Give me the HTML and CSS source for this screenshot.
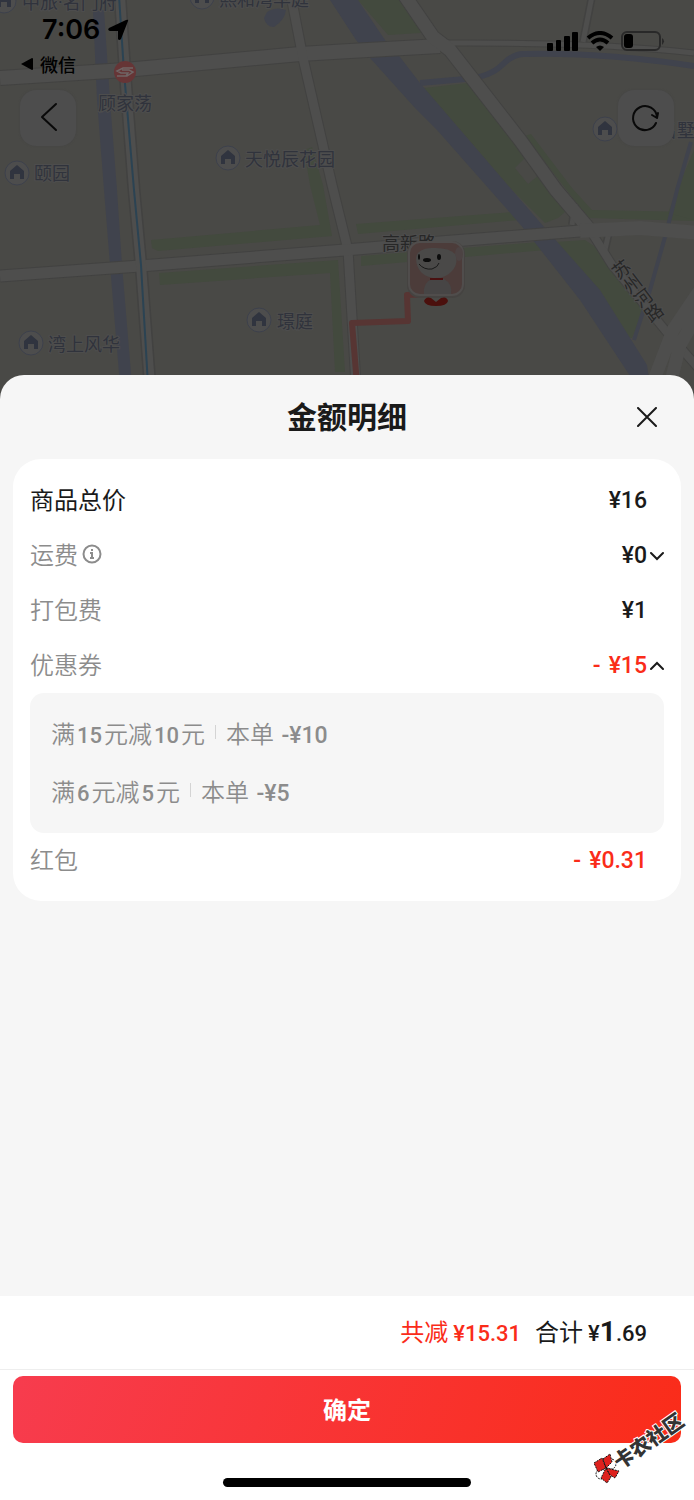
FILE: index.html
```html
<!DOCTYPE html>
<html lang="zh-CN">
<head>
<meta charset="utf-8">
<meta name="viewport" content="width=device-width, initial-scale=1">
<title>金额明细</title>
<link rel="stylesheet" href="styles.css">
</head>
<body>
<div class="app">
  <header class="top">
    <svg class="map" viewBox="0 0 694 400" preserveAspectRatio="xMidYMin slice" aria-hidden="true">
      <defs>
        <g id="poi">
          <circle r="12" fill="#4d4d4d" stroke="#3d414c" stroke-width="1"/>
          <path d="M0-8 7-2V6H3V1H-3V6H-7V-2Z" fill="#30343f"/>
        </g>
      </defs>
      <rect width="694" height="400" fill="#494946"/>
      <g fill="#434a3e">
        <path d="M358 0H402L425 29 420 33 388 35Z"/>
        <path d="M424 88 468 83 515 140 556 190 565 212 558 218 545 223 512 190Z"/>
        <path d="M525 136 531 134 572 188 592 210 694 212V221L588 218Z"/>
        <path d="M555 242 585 240 600 250 618 275 643 310 632 338 624 337Z"/>
        <path d="M694 150 677 190 668 213 694 220Z"/>
        <path d="M356 224 512 212 520 220 358 234Z"/>
        <path d="M361 256 540 242 546 250 361 266Z"/>
        <path d="M151 240 320 225 310 185 304 150 312 147 323 185 332 236 158 251 152 248Z"/>
        <path d="M159 273 338 260 345 372H335L330 273 160 285Z"/>
      </g>
      <path d="M515 168 525 158 539 175 528 184Z" fill="#494946"/>
      <g fill="#40434d">
        <path d="M93 10H104L110 100 117 190 122 265 132 385H120L110 265 104 190 97 100Z"/>
        <path d="M330 0H358L385 40 400 57 420 83 512 190 545 228 600 290 647 365 650 385H636L580 300 525 230 490 190 437 130 415 108 370 58 356 40Z"/>
        <path d="M267 12Q276 6 286 10 285 20 274 27 266 27 264 18Z"/>
      </g>
      <g fill="none" stroke="#40434d">
        <path d="M420 83 465 79Q490 77 502 65T525 54Q600 52 694 66" stroke-width="6"/>
        <path d="M691 142 677 190 667 230 650 290 634 340" stroke-width="4"/>
      </g>
      <g fill="none" stroke="#424241" stroke-linejoin="round">
        <path d="M0 78 125 70 300 54 350 51 440 46" stroke-width="16"/>
        <path d="M440 43Q600 42 694 53" stroke-width="7"/>
        <path d="M405-4 433 37 450 50 520 140 556 190 590 230" stroke-width="15"/>
        <path d="M590 230 612 265 665 330 700 370" stroke-width="10"/>
        <path d="M291-4 303 58 332 185 348 250 356 385" stroke-width="11"/>
        <path d="M0 276 140 266 345 250 440 242 580 231 640 228 700 233" stroke-width="13"/>
        <path d="M120-4 125 72 134 190 141 265 150 385" stroke-width="13"/>
        <path d="M592-4 583 42M572 225 575 204M605 250 609 232M700 290 673 330 652 385M700 310 680 345 670 385" stroke-width="8"/>
      </g>
      <g fill="none" stroke="#4e4e4d" stroke-linejoin="round">
        <path d="M592-4 583 42M572 225 575 204M605 250 609 232" stroke-width="5"/>
        <path d="M0 78 125 70 300 54 350 51 440 46" stroke-width="14"/>
        <path d="M440 43Q600 42 694 53" stroke-width="5"/>
        <path d="M405-4 433 37 450 50 520 140 556 190 590 230" stroke-width="13"/>
        <path d="M590 230 612 265 665 330 700 370" stroke-width="8"/>
        <path d="M700 290 673 330 652 385M700 310 680 345 670 385" stroke-width="13"/>
        <path d="M291-4 303 58 332 185 348 250 356 385" stroke-width="9"/>
        <path d="M0 276 140 266 345 250 440 242 580 231 640 228 700 233" stroke-width="11"/>
        <path d="M580 231 640 228 700 233" stroke-width="14"/>
        <path d="M120-4 125 72 134 190 141 265 150 385" stroke-width="10"/>
      </g>
      <path d="M119-4 124 72 134 190 141 265 148 385" fill="none" stroke="#2b4353" stroke-width="2"/>
      <path d="M357 385 352 323 408 321 407 295 430 294" fill="none" stroke="#573533" stroke-width="6" stroke-linejoin="round"/>
      <circle cx="125" cy="72" r="11" fill="#663536"/>
      <path d="M133 68H123L117 71 121 73H128L126 76H117M117 76H127L133 72 129 70H122" fill="none" stroke="#706565" stroke-width="1.500"/>
      <use href="#poi" x="4" y="1"/>
      <use href="#poi" x="202" y="-3"/>
      <use href="#poi" x="17" y="173"/>
      <use href="#poi" x="228" y="158"/>
      <use href="#poi" x="31" y="343"/>
      <use href="#poi" x="259" y="320"/>
      <use href="#poi" x="605" y="129"/>
      <g class="place">
        <text x="22" y="9">中旅<tspan class="dot">·</tspan>名门府</text>
        <text x="219" y="6">熙和湾华庭</text>
        <text x="98" y="110">顾家荡</text>
        <text x="34" y="180">颐园</text>
        <text x="245" y="166">天悦辰花园</text>
        <text x="48" y="351">湾上风华</text>
        <text x="277" y="328">璟庭</text>
        <text x="659" y="137">名墅</text>
      </g>
      <g class="street">
        <text x="382" y="250">高新路</text>
        <text class="street-down" transform="translate(616 262) rotate(-37)">苏州河路</text>
      </g>
      <rect x="407" y="241" width="58" height="57" rx="13" fill="#454341"/>
      <rect x="409" y="242" width="54" height="53" rx="11" fill="#4c3c3a" stroke="#504d4c" stroke-width="2"/>
      <path d="M424 294Q423 282 432 279H444Q453 284 451 294Z" fill="#474545"/>
      <ellipse cx="459" cy="254" rx="4" ry="7" fill="#4c4343"/>
      <path d="M416 259Q416 249 431 248 449 247 455 254 459 263 452 271 445 279 433 278 417 275 416 259Z" fill="#4a4948"/>
      <path d="M430 279H443" stroke="#4a1111" stroke-width="2"/>
      <g fill="#0c0c0c"><ellipse cx="427" cy="260" rx="4" ry="2"/><ellipse cx="439" cy="257" rx="2" ry="3"/><ellipse cx="419" cy="257" rx="1" ry="3"/></g>
      <path d="M419 264Q424 270 432 269 438 267 439 263" fill="none" stroke="#191919"/>
      <path d="M424 301Q426 296 431 298L436 302 441 298Q447 296 448 301 447 306 436 306 425 306 424 301Z" fill="#4b100d"/>
    </svg>

    <div class="status">
      <div class="status-left">
        <div class="clock">7:06
          <svg width="22" height="22" viewBox="0 0 22 22" aria-hidden="true"><path d="M21 2 14 20Q12 22 11 20V12H3Q0 11 2 9L19 1Q22 0 21 2Z"/></svg>
        </div>
        <a class="return" href="#"><svg width="12" height="12" viewBox="0 0 12 12" aria-hidden="true"><path d="M0 6 11 0Q12 0 12 1V11Q12 12 11 12Z"/></svg>微信</a>
      </div>
      <svg class="signals" width="118" height="20" viewBox="0 0 118 20" aria-hidden="true">
        <rect x="0" y="12" width="6" height="8" rx="1"/><rect x="9" y="9" width="5" height="11" rx="1"/><rect x="17" y="5" width="6" height="15" rx="1"/><rect x="25" y="1" width="6" height="19" rx="1"/>
        <path d="M41 7Q53-3 65 7M45 12Q53 5 61 12" fill="none" stroke="#000" stroke-width="4"/>
        <path d="M49 16Q53 13 57 16L53 20Z"/>
        <rect x="75" y="1" width="38" height="18" rx="5" fill="none" stroke="#292929" stroke-width="2"/>
        <rect x="77" y="3" width="9" height="14" rx="3"/><path d="M115 7Q119 10 115 14Z" fill="#292929"/>
      </svg>
    </div>

    <nav class="tools">
      <button class="tool" aria-label="返回"><svg width="56" height="56" viewBox="0 0 56 56"><path d="M36 14 22 27 36 40"/></svg></button>
      <button class="tool" aria-label="刷新"><svg width="56" height="56" viewBox="0 0 56 56"><path d="M38 33A12 12 0 1 1 39 27M34 25 39 28 40 23"/></svg></button>
    </nav>
  </header>

  <main class="sheet">
    <div class="sheet-head">
      <h1>金额明细</h1>
      <button class="close" aria-label="关闭"><svg width="20" height="20" viewBox="0 0 20 20"><path d="M1 1 19 19M19 1 1 19"/></svg></button>
    </div>

    <section class="card">
      <div class="row strong"><span>商品总价</span><span class="amount">¥16</span></div>
      <div class="row">
        <span class="label">运费<svg width="20" height="20" viewBox="0 0 20 20" aria-hidden="true"><circle cx="10" cy="10" r="8.500"/><path d="M8 9H10V14M8 14H12"/><path d="M9 6H11"/></svg></span>
        <button class="amount toggle" aria-expanded="false" aria-label="¥0 展开">¥0<svg width="17" height="12" viewBox="0 0 17 12"><path d="M4 3 10 9 16 3"/></svg></button>
      </div>
      <div class="row"><span>打包费</span><span class="amount">¥1</span></div>
      <div class="row">
        <span>优惠券</span>
        <button class="amount toggle off" aria-expanded="true" aria-label="减 ¥15 收起"><span class="minus">-</span>¥15<svg width="17" height="12" viewBox="0 0 17 12"><path d="M4 9 10 3 16 9"/></svg></button>
      </div>
      <ul class="coupons">
        <li><span>满<b>15</b>元减<b>10</b>元</span><i></i><span>本单 <em>-¥10</em></span></li>
        <li><span>满<b>6</b>元减<b>5</b>元</span><i></i><span>本单 <em>-¥5</em></span></li>
      </ul>
      <div class="row"><span>红包</span><span class="amount off"><span class="minus">-</span>¥0.31</span></div>
    </section>
  </main>

  <footer class="bottom">
    <div class="totals">
      <span class="saved">共减<b>¥15.31</b></span>
      <span>合计<b>¥<strong>1</strong>.69</b></span>
    </div>
    <div class="action"><button class="confirm">确定</button></div>
    <div class="home"></div>
    <svg class="mark" width="104" height="86" viewBox="0 0 104 86">
      <g stroke="#151515" stroke-width="1" stroke-dasharray="2 1">
        <ellipse cx="21" cy="56" rx="5" ry="5" fill="#fff"/><ellipse cx="11" cy="66" rx="5" ry="5" fill="#fff"/>
        <path d="M4 55 12 50 16 60 8 64ZM13 51 20 46 22 54 16 60ZM16 60 29 63 25 70 20 67ZM16 60 21 69 17 75 11 70Z" fill="#de211d"/>
      </g>
      <text transform="translate(30 62) rotate(-35)">卡农社区</text>
    </svg>
  </footer>
</div>
</body>
</html>
```

FILE: styles.css
```css
* { box-sizing: border-box; }

body {
  margin: 0;
  background: #f6f6f6;
  color: #1a1a1a;
  font-family: "Noto Sans CJK SC", sans-serif;
  font-size: 24px;
}

button {
  border: 0;
  padding: 0;
  background: none;
  color: inherit;
  font: inherit;
  cursor: pointer;
}

.app {
  display: flex;
  flex-direction: column;
  min-height: 100vh;
}

/* Map header */
.top {
  position: relative;
  min-height: 375px;
}

.map {
  position: absolute;
  inset: 0;
  width: 100%;
  height: 400px;
}

.place text,
.street text {
  font-size: 18px;
  fill: #30333c;
  stroke: #4d4d4d;
  stroke-width: 2px;
  paint-order: stroke;
}

.place .dot { font-family: Roboto, sans-serif; }
.street text { fill: #272727; }
.street .street-down { writing-mode: vertical-rl; }

.status {
  position: relative;
  display: flex;
  align-items: center;
  justify-content: space-between;
  height: 82px;
  padding: 0 29px 0 21px;
  color: #000;
}

.status-left { padding-top: 14px; }

.clock {
  display: flex;
  align-items: center;
  gap: 7px;
  padding-left: 21px;
  font: 600 27px/32px Inter, sans-serif;
}

.return {
  display: flex;
  align-items: center;
  gap: 7px;
  color: #000;
  font-size: 18px;
  font-weight: 500;
  line-height: 36px;
  text-decoration: none;
}

.tools {
  position: relative;
  display: flex;
  justify-content: space-between;
  padding: 8px 20px 0;
}

.tool {
  width: 56px;
  height: 56px;
  border-radius: 16px;
  background: #4d4d4d;
  box-shadow: 0 0 2px #444;
}

.tool svg {
  display: block;
  fill: none;
  stroke: #090909;
  stroke-width: 2;
  stroke-linecap: round;
  stroke-linejoin: round;
}

/* Price sheet */
.sheet {
  position: relative;
  flex: 1;
  padding: 0 13px 24px;
  border-radius: 24px 24px 0 0;
  background: #f6f6f6;
}

.sheet-head {
  display: grid;
  grid-template-columns: 40px 1fr 40px;
  align-items: center;
  height: 84px;
  padding: 0 14px;
}

.sheet-head h1 {
  grid-column: 2;
  margin: 0;
  padding-bottom: 4px;
  font-size: 30px;
  font-weight: 700;
  text-align: center;
}

.close {
  display: grid;
  place-items: center;
  width: 40px;
  height: 40px;
}

.close svg,
.toggle svg {
  fill: none;
  stroke: #1a1a1a;
  stroke-width: 2;
  stroke-linecap: round;
}

.card {
  padding: 14px 17px 13px;
  border-radius: 28px;
  background: #fff;
}

.row {
  display: flex;
  align-items: center;
  justify-content: space-between;
  height: 55px;
  padding-bottom: 4px;
  color: #8c8c8c;
  font-weight: 350;
}

.strong {
  color: #1a1a1a;
  font-weight: 400;
}

.label {
  display: flex;
  align-items: center;
  gap: 4px;
}

.label svg {
  fill: none;
  stroke: #8c8c8c;
  stroke-width: 2;
}

.amount {
  padding: 4px 17px 0 0;
  color: #1a1a1a;
  font: 500 23px/32px Roboto, sans-serif;
}

.toggle {
  display: flex;
  align-items: center;
  padding-right: 0;
}

.off { color: #fa2c19; }
.minus { margin-right: 8px; }

.coupons {
  margin: 0;
  padding: 10px 21px 14px;
  border-radius: 14px;
  background: #f6f6f6;
  color: #8c8c8c;
  font-weight: 350;
  list-style: none;
}

.coupons li {
  display: flex;
  align-items: center;
  height: 58px;
}

.coupons b,
.coupons em {
  font-family: Roboto, sans-serif;
  font-size: 22px;
  font-style: normal;
  font-weight: 500;
}

.coupons b { margin: 0 2px; }
.coupons em {
  margin-left: 2px;
  font-size: 23px;
}

.coupons i {
  width: 1px;
  height: 14px;
  margin: 0 10px;
  background: #d4d4d4;
}

/* Totals and confirm */
.bottom {
  position: relative;
  background: #fff;
}

.totals {
  display: flex;
  align-items: center;
  justify-content: flex-end;
  gap: 14px;
  height: 74px;
  padding: 0 47px 2px;
  border-bottom: 1px solid #eee;
}

.totals b {
  margin-left: 5px;
  font: 500 22px/32px Roboto, sans-serif;
}

.totals strong {
  font-size: 28px;
  font-weight: 700;
}

.saved { color: #fa2c19; }

.action { padding: 6px 13px 0; }

.confirm {
  display: block;
  width: 100%;
  height: 67px;
  padding-bottom: 2px;
  border-radius: 10px;
  background: linear-gradient(110deg, #f73c4e, #fa2c19);
  color: #fff;
  font-weight: 700;
}

.home {
  width: 248px;
  height: 9px;
  margin: 35px auto 13px;
  border-radius: 5px;
  background: #000;
}

.mark {
  position: absolute;
  right: 0;
  bottom: 6px;
  overflow: visible;
  pointer-events: none;
}

.mark text {
  font-size: 20px;
  font-weight: 900;
  fill: #333;
  stroke: #fff;
  stroke-width: 2px;
  paint-order: stroke;
}
```
